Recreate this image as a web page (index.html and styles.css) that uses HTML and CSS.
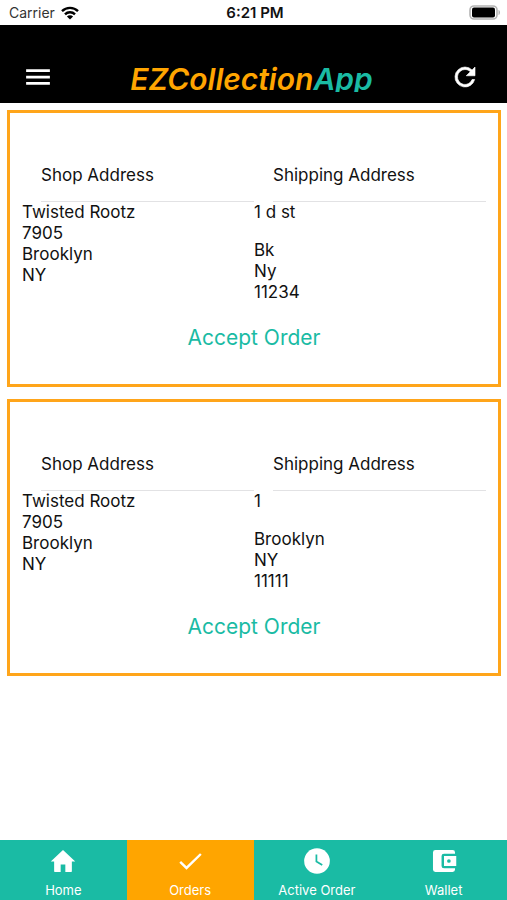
FILE: index.html
```html
<!DOCTYPE html>
<html lang="en">
<head>
<meta charset="utf-8">
<meta name="viewport" content="width=device-width, initial-scale=1">
<title>EZCollectionApp</title>
<link rel="stylesheet" href="styles.css">
</head>
<body>
<div class="status">
  <div class="carrier">
    <span>Carrier</span>
    <svg width="18" height="14" viewBox="0 0 18 14" aria-hidden="true">
      <g fill="none" stroke="#000" stroke-width="2.4">
        <path d="M1 5.2a11.3 11.3 0 0 1 16 0"/>
        <path d="M4 8.3a7 7 0 0 1 10 0"/>
      </g>
      <path d="M9 13.6 5.9 10.5a4.4 4.4 0 0 1 6.2 0z"/>
    </svg>
  </div>
  <div class="time">6:21 PM</div>
  <svg class="battery" width="32" height="15" viewBox="0 0 32 15" aria-hidden="true">
    <rect x="1" y="1" width="27" height="13" rx="4" fill="#fff" stroke="#b4b4b4" stroke-width="1.6"/>
    <rect x="3" y="2.500" width="23" height="10" rx="2"/>
    <path d="M29.500 5c2 .6 2 4.400 0 5z" fill="#b4b4b4"/>
  </svg>
</div>
<header class="header">
  <button class="icon-button" aria-label="Menu">
    <svg width="30" height="30" viewBox="0 0 24 24" aria-hidden="true"><path d="M2.500 18.200h19v-2.200h-19zm0-5.100h19v-2.200h-19zm0-7.300V8h19V5.800z"/></svg>
  </button>
  <h1 class="title">EZCollection<span class="title-app">App</span></h1>
  <button class="icon-button" aria-label="Refresh">
    <svg width="30" height="30" viewBox="0 0 24 24" aria-hidden="true"><path stroke="#fff" stroke-width=".5" d="M17.650 6.350A7.960 7.960 0 0 0 12 4a8 8 0 1 0 7.730 10h-2.080A6 6 0 1 1 12 6c1.660 0 3.140.69 4.220 1.780L13 11h7V4l-2.350 2.350z"/></svg>
  </button>
</header>
<main class="orders">
  <article class="card">
    <div class="columns">
      <section>
        <h2 class="heading">Shop Address</h2>
        <p>Twisted Rootz</p>
        <p>7905</p>
        <p>Brooklyn</p>
        <p>NY</p>
      </section>
      <section>
        <h2 class="heading">Shipping Address</h2>
        <p class="street">1 d st</p>
        <p>Bk</p>
        <p>Ny</p>
        <p>11234</p>
      </section>
    </div>
    <button class="accept">Accept Order</button>
  </article>
  <article class="card">
    <div class="columns">
      <section>
        <h2 class="heading">Shop Address</h2>
        <p>Twisted Rootz</p>
        <p>7905</p>
        <p>Brooklyn</p>
        <p>NY</p>
      </section>
      <section>
        <h2 class="heading">Shipping Address</h2>
        <p class="street">1</p>
        <p>Brooklyn</p>
        <p>NY</p>
        <p>11111</p>
      </section>
    </div>
    <button class="accept">Accept Order</button>
  </article>
</main>
<nav class="tabs">
  <a class="tab" href="#home">
    <svg width="28" height="28" viewBox="0 0 24 24" aria-hidden="true"><path d="M10 21.500v-6.500h4v6.500h4.600q1 0 1-1V12.500H22.500L12 2.500 1.500 12.500h2.900v8q0 1 1 1z"/></svg>
    <span>Home</span>
  </a>
  <a class="tab active" href="#orders" aria-current="page">
    <svg width="28" height="28" viewBox="0 0 24 24" aria-hidden="true"><path d="M9 16.600 4.300 12l-1.420 1.410L9 19.500 22 6.700l-1.410-1.410z"/></svg>
    <span>Orders</span>
  </a>
  <a class="tab" href="#active">
    <svg width="28" height="28" viewBox="0 0 24 24" aria-hidden="true"><circle cx="12" cy="12" r="11"/><path d="M11.500 6.500v6l5 3" fill="none" stroke="#1abba4" stroke-width="1.500"/></svg>
    <span>Active Order</span>
  </a>
  <a class="tab" href="#wallet">
    <svg width="28" height="28" viewBox="0 0 24 24" aria-hidden="true"><path transform="translate(-.6 -.6) scale(1.05)" d="M21 18v1a2 2 0 0 1-2 2H5a2 2 0 0 1-2-2V5a2 2 0 0 1 2-2h14a2 2 0 0 1 2 2v1h-9a2 2 0 0 0-2 2v8a2 2 0 0 0 2 2h9zm-9-2h10V8H12v8zm4-2.500a1.500 1.500 0 1 1 0-3 1.500 1.500 0 0 1 0 3z"/></svg>
    <span>Wallet</span>
  </a>
</nav>
</body>
</html>
```
FILE: styles.css
```css
* {
  box-sizing: border-box;
}

body {
  display: flex;
  flex-direction: column;
  min-height: 100vh;
  margin: 0;
  background: #fff;
  color: #111;
  font: 17px/21px Inter, "Liberation Sans", sans-serif;
}

h1, h2, p {
  margin: 0;
}

button {
  border: 0;
  padding: 0;
  background: none;
  font: inherit;
}

svg {
  display: block;
}

.status {
  display: grid;
  grid-template-columns: 1fr auto 1fr;
  align-items: center;
  height: 25px;
  padding: 0 6px 0 9px;
  font-size: 14px;
}

.carrier {
  display: flex;
  align-items: center;
  gap: 6px;
  color: #333;
}

.time {
  color: #111;
  font-size: 15px;
  font-weight: 600;
}

.battery {
  justify-self: end;
}

.header {
  display: flex;
  align-items: flex-end;
  justify-content: space-between;
  height: 78px;
  padding: 0 27px 11px 23px;
  background: #000;
}

.icon-button svg {
  fill: #fff;
}

.title {
  height: 29px;
  overflow: hidden;
  color: #ffa500;
  font-size: 30px;
  font-style: italic;
  font-weight: 600;
  line-height: 32px;
}

.title-app {
  color: #1abba4;
}

.orders {
  display: flex;
  flex: 1;
  flex-direction: column;
  gap: 12px;
  padding: 7px 6px 7px 7px;
}

.card {
  display: flex;
  flex-direction: column;
  align-items: center;
  border: 3px solid #ffa51a;
  padding: 35px 12px 32px;
}

.columns {
  display: grid;
  grid-template-columns: 1fr 1fr;
  width: 100%;
}

.heading {
  margin-left: 19px;
  border-bottom: 1px solid #e2e2e4;
  padding: 17px 0 15px;
  font-size: 17px;
  font-weight: 400;
}

.street {
  margin-bottom: 17px;
}

.accept {
  margin-top: 21px;
  color: #1abba4;
  font-size: 21px;
  line-height: 28px;
}

.tabs {
  display: grid;
  grid-template-columns: repeat(4, 1fr);
  height: 60px;
}

.tab {
  display: flex;
  flex-direction: column;
  align-items: center;
  gap: 7px;
  padding-top: 7px;
  background: #1abba4;
  color: #fff;
  font-size: 13px;
  line-height: 16px;
  text-decoration: none;
}

.tab svg {
  fill: #fff;
}

.active {
  background: #ffa500;
}
```
